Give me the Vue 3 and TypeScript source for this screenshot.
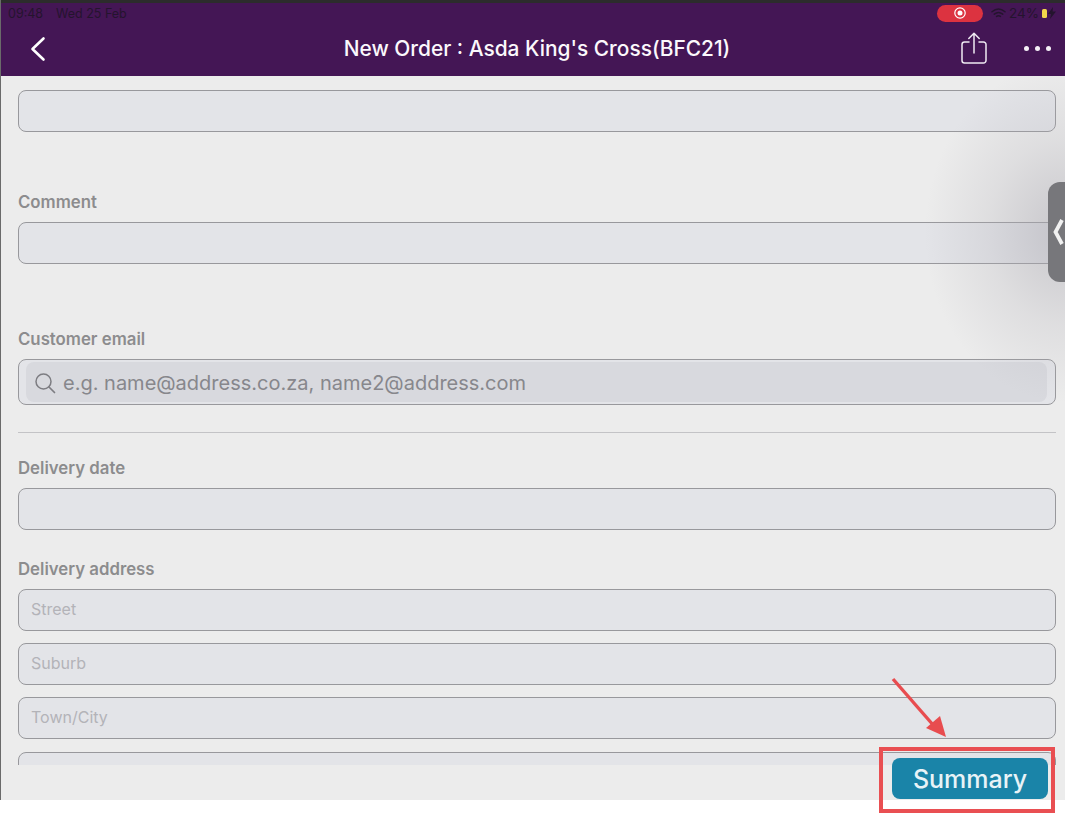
<script setup lang="ts">
const addressFields: string[] = ['Street', 'Suburb', 'Town/City', '']
</script>

<template>
  <div class="page">
    <div class="screen">
      <header class="header">
        <div class="status">
          <div class="status-left">
            <span>09:48</span>
            <span>Wed 25 Feb</span>
          </div>
          <div class="status-right">
            <span class="rec">
              <svg width="14" height="14" viewBox="0 0 14 14">
                <circle cx="7" cy="7" r="5.2" fill="none" stroke="#fff" stroke-width="1.2" />
                <circle cx="7" cy="7" r="2.5" fill="#fff" />
              </svg>
            </span>
            <svg class="wifi" width="15" height="11" viewBox="0 0 15 11">
              <path d="M1 3.8C5 .4 10 .4 14 3.8M3.3 6.2c2.6-2.1 5.8-2.1 8.4 0M5.6 8.4c1.2-.9 2.6-.9 3.8 0" fill="none" stroke="#24142e" stroke-width="1.5" stroke-linecap="round" />
            </svg>
            <span class="battery-text">24%</span>
            <span class="battery"></span>
            <svg class="bolt" width="8" height="12" viewBox="0 0 8 12">
              <path d="M5 0 0 7h3l-1 5 6-7.5H4.6z" fill="#24142e" />
            </svg>
          </div>
        </div>
        <nav class="nav">
          <svg class="back" width="18" height="26" viewBox="0 0 18 26">
            <path d="M14.5 2.5 3.500 13l11 10.5" fill="none" stroke="#fff" stroke-width="2.6" stroke-linecap="round" stroke-linejoin="round" />
          </svg>
          <h1 class="title">New Order : Asda King's Cross(BFC21)</h1>
          <div class="actions">
            <svg width="28" height="34" viewBox="0 0 28 34">
              <path d="M9 11H4.500A2.500 2.500 0 0 0 2 13.500V29.500A2.500 2.500 0 0 0 4.500 32h19a2.500 2.500 0 0 0 2.500-2.500V13.500A2.500 2.500 0 0 0 23.500 11H19" fill="none" stroke="#efeaf2" stroke-width="1.5" stroke-linecap="round" />
              <path d="M14 22V2.5M8.800 7.500 14 2.200l5.200 5.300" fill="none" stroke="#efeaf2" stroke-width="1.5" stroke-linecap="round" stroke-linejoin="round" />
            </svg>
            <div class="dots"><i></i><i></i><i></i></div>
          </div>
        </nav>
      </header>

      <main class="form">
        <div class="input"></div>

        <section class="group comment">
          <label>Comment</label>
          <div class="input"></div>
        </section>

        <section class="group email">
          <label>Customer email</label>
          <div class="email-box">
            <div class="search">
              <svg width="22" height="22" viewBox="0 0 22 22">
                <circle cx="9.5" cy="9.5" r="7.5" fill="none" stroke="#7d7d82" stroke-width="1.5" />
                <path d="m15 15 5.5 5.5" stroke="#7d7d82" stroke-width="1.7" stroke-linecap="round" />
              </svg>
              <span>e.g. name@address.co.za, name2@address.com</span>
            </div>
          </div>
        </section>

        <hr class="divider" />

        <section class="group date">
          <label>Delivery date</label>
          <div class="input"></div>
        </section>

        <section class="group address">
          <label>Delivery address</label>
          <div class="address-list">
            <div v-for="(field, i) in addressFields" :key="i" class="input">{{ field }}</div>
          </div>
        </section>
      </main>

      <footer class="footer">
        <button class="summary">Summary</button>
      </footer>

      <div class="shade"></div>
      <div class="handle">
        <svg width="12" height="28" viewBox="0 0 12 28">
          <path d="M10 2 3.500 14 10 26" fill="none" stroke="#f1f1f1" stroke-width="3.800" />
        </svg>
      </div>
    </div>

    <!-- annotation on top of the screenshot -->
    <svg class="arrow" width="70" height="72" viewBox="0 0 70 72">
      <path d="M2 2 43 49" stroke="#e84c4f" stroke-width="3.4" />
      <path d="M55 60 35 51 49 39z" fill="#e84c4f" />
    </svg>
    <div class="highlight"></div>
  </div>
</template>

<style scoped>
.page {
  position: relative;
  width: 1065px;
  height: 815px;
  background: #fff;
}

.screen {
  position: relative;
  height: 800px;
  display: flex;
  flex-direction: column;
  box-sizing: border-box;
  border-left: 1px solid #6a6a6a;
  background: #ececec;
  font-family: Inter, "Liberation Sans", sans-serif;
}

.header {
  height: 76px;
  flex: none;
  box-sizing: border-box;
  border-top: 3px solid #2c2c2c;
  background: #441655;
}

.status {
  height: 20px;
  display: flex;
  justify-content: space-between;
  align-items: center;
  padding: 0 9px 0 7px;
  font-size: 12.5px;
  color: #24142e;
}

.status-left {
  display: flex;
  gap: 13px;
}

.status-right {
  display: flex;
  align-items: center;
}

.rec {
  width: 46px;
  height: 17px;
  margin-right: 8px;
  display: flex;
  align-items: center;
  justify-content: center;
  border-radius: 9px;
  background: #dc3340;
}

.battery-text {
  margin: 0 3px 0 3px;
  font-size: 13.5px;
}

.battery {
  width: 5px;
  height: 9px;
  border-radius: 1.5px;
  background: #f2d64b;
}

.bolt {
  margin-left: 1px;
}

.nav {
  position: relative;
  height: 53px;
  display: flex;
  align-items: center;
  justify-content: center;
  margin-top: -1px;
  padding-left: 8px;
}

.back {
  position: absolute;
  left: 28px;
  top: 14px;
}

.title {
  margin: 0;
  font-size: 20.9px;
  font-weight: 500;
  color: #fbf8fc;
  white-space: nowrap;
}

.actions {
  position: absolute;
  right: 14px;
  top: 9px;
  display: flex;
  align-items: center;
  gap: 36px;
}

.dots {
  display: flex;
  gap: 6px;
}

.dots i {
  width: 5px;
  height: 5px;
  border-radius: 50%;
  background: #f5f0f7;
}

.form {
  height: 689px;
  flex: none;
  overflow: hidden;
  box-sizing: border-box;
  padding: 14px 9px 0 17px;
}

.input {
  height: 42px;
  box-sizing: border-box;
  padding-left: 12px;
  border: 1px solid #98989c;
  border-radius: 8px;
  background: #e3e4e8;
  font-size: 16px;
  line-height: 39px;
  color: #b3b3b8;
}

.group label {
  display: block;
  height: 20px;
  margin-bottom: 10px;
  font-size: 16.8px;
  font-weight: 600;
  line-height: 20px;
  color: #8c8c8e;
}

.comment {
  margin-top: 60px;
}

.email {
  margin-top: 65px;
}

.email-box {
  height: 46px;
  box-sizing: border-box;
  padding: 2px 8px 2px 7px;
  border: 1px solid #98989c;
  border-radius: 8px;
  background: #e3e4e8;
}

.search {
  height: 100%;
  display: flex;
  align-items: center;
  gap: 7px;
  padding-left: 8px;
  padding-top: 2px;
  box-sizing: border-box;
  border-radius: 8px;
  background: #d8d9de;
  font-size: 20px;
  color: #87878c;
}

.divider {
  height: 1px;
  margin: 27px 0 0;
  border: 0;
  background: #c3c3c6;
}

.date {
  margin-top: 25px;
}

.address {
  margin-top: 29px;
}

.address-list {
  display: flex;
  flex-direction: column;
  gap: 12.2px;
}

.footer {
  position: relative;
  flex: 1;
}

.summary {
  position: absolute;
  right: 17px;
  top: -7px;
  width: 156px;
  height: 41px;
  border: 0;
  border-radius: 8px;
  background: #1a84a8;
  font-family: inherit;
  font-size: 25px;
  font-weight: 500;
  color: #e8f3f7;
}

.shade {
  position: absolute;
  right: 0;
  top: 76px;
  width: 300px;
  height: 340px;
  background: radial-gradient(ellipse 140px 170px at 100% 46%, rgba(170, 168, 176, 0.55), rgba(175, 173, 180, 0.22) 55%, rgba(175, 173, 180, 0) 100%);
  pointer-events: none;
}

.handle {
  position: absolute;
  right: 0;
  top: 182px;
  width: 17px;
  height: 100px;
  display: flex;
  align-items: center;
  justify-content: flex-start;
  padding-left: 4px;
  box-sizing: border-box;
  border-radius: 12px 0 0 12px;
  background: #77777b;
}

.arrow {
  position: absolute;
  left: 891px;
  top: 677px;
}

.highlight {
  position: absolute;
  left: 879px;
  top: 747px;
  width: 176px;
  height: 66px;
  box-sizing: border-box;
  border: 4px solid #e94f52;
}
</style>

<style>
html,
body {
  background: #fff;
}
</style>
